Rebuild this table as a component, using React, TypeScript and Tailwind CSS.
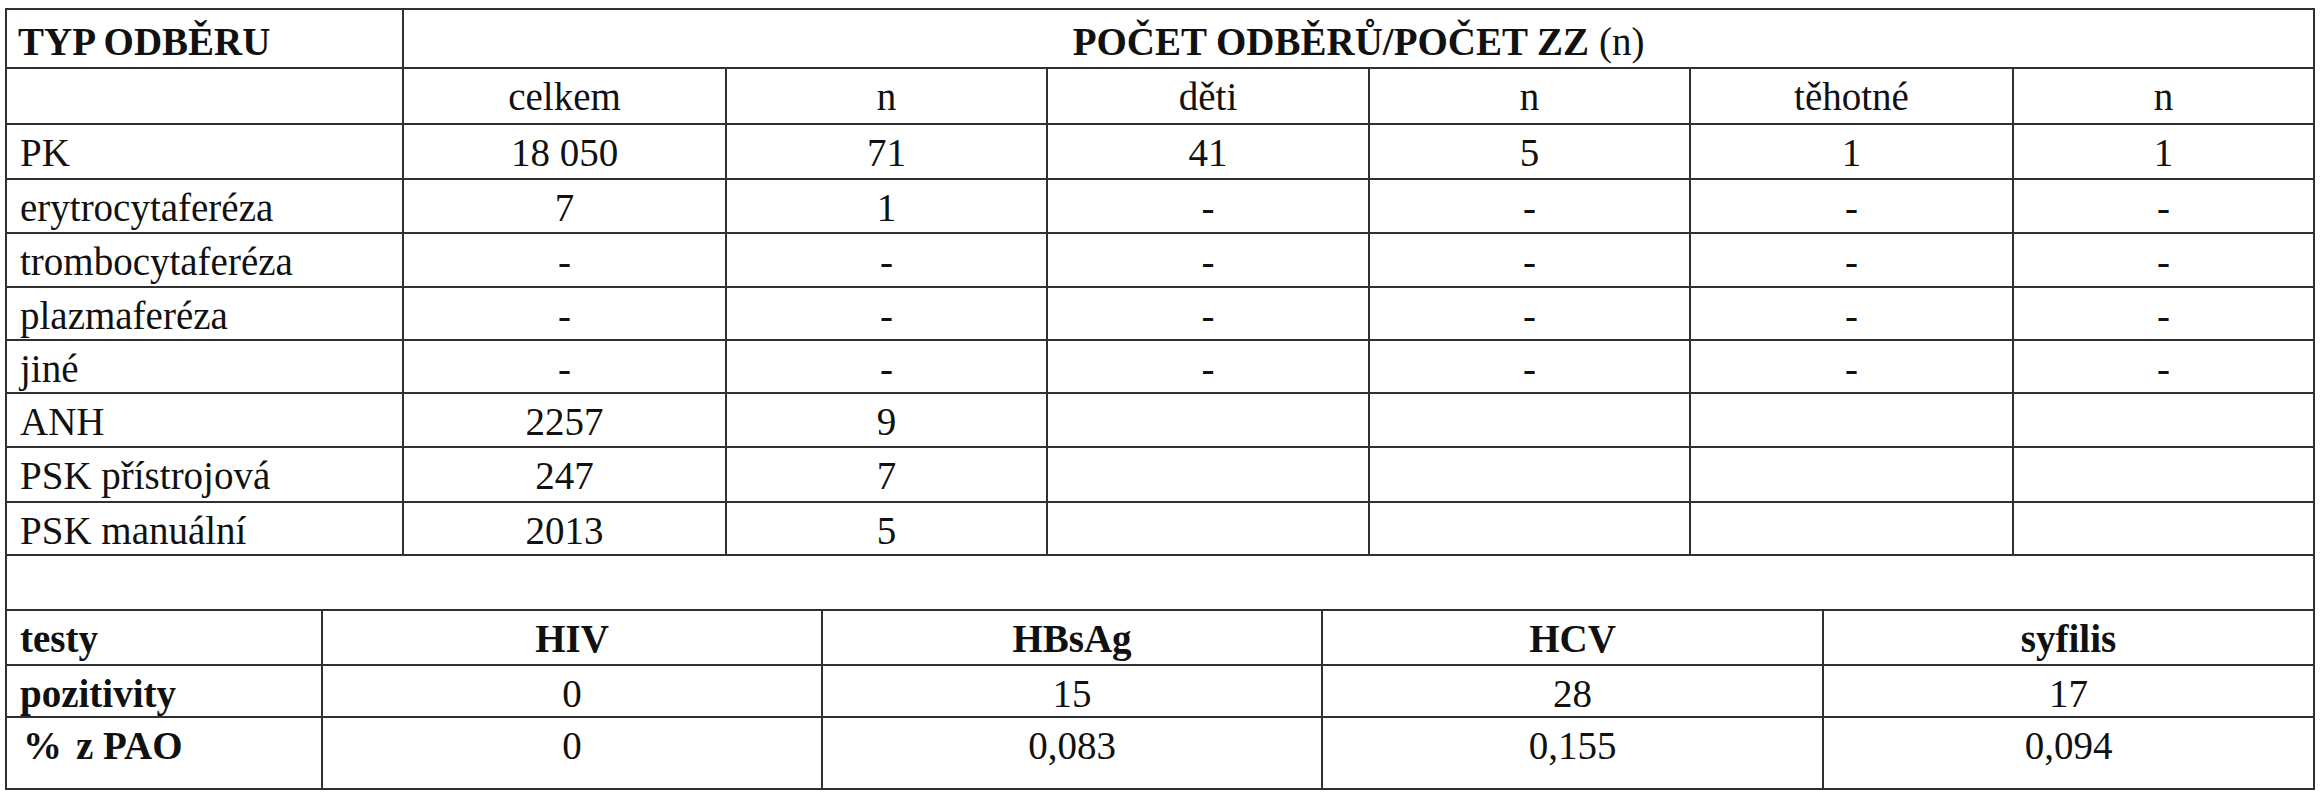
import React from "react";

// Rows of the upper table: label, celkem, n, děti, n, těhotné, n — plus the row height
const odbery = [
  { h: "h-[55px]", cells: ["PK", "18 050", "71", "41", "5", "1", "1"] },
  { h: "h-[54px]", cells: ["erytrocytaferéza", "7", "1", "-", "-", "-", "-"] },
  { h: "h-[54px]", cells: ["trombocytaferéza", "-", "-", "-", "-", "-", "-"] },
  { h: "h-[53px]", cells: ["plazmaferéza", "-", "-", "-", "-", "-", "-"] },
  { h: "h-[53px]", cells: ["jiné", "-", "-", "-", "-", "-", "-"] },
  { h: "h-[54px]", cells: ["ANH", "2257", "9", "", "", "", ""] },
  { h: "h-[55px]", cells: ["PSK přístrojová", "247", "7", "", "", "", ""] },
  { h: "h-[53px]", cells: ["PSK manuální", "2013", "5", "", "", "", ""] },
];

const subHead = ["", "celkem", "n", "děti", "n", "těhotné", "n"];

// Lower table: tests
const testy = [
  { h: "h-[55px]", bold: true, label: "testy", cells: ["HIV", "HBsAg", "HCV", "syfilis"] },
  { h: "h-[52px]", bold: false, label: "pozitivity", cells: ["0", "15", "28", "17"] },
  { h: "h-[72px]", bold: false, label: "pao", cells: ["0", "0,083", "0,155", "0,094"] },
];

const cell = "border-r-2 border-b-2 border-[#303030] pt-[6px] leading-[44px] whitespace-nowrap";

export default function App() {
  return (
    <div className="w-[2322px] h-[800px] bg-white text-[#111111] text-[39px] pt-[8px] pl-[5px] font-['Liberation_Serif','DejaVu_Serif',serif]">
      {/* Upper table */}
      <div className="grid w-[2310px] grid-cols-[397px_323px_321px_322px_321px_323px_301px] border-t-2 border-l-2 border-[#303030]">
        <div className={`${cell} h-[59px] pt-[10px] pl-[11px] font-bold`}>TYP ODBĚRU</div>
        <div className={`${cell} h-[59px] pt-[10px] col-span-6 text-center`}>
          <span className="font-bold">POČET ODBĚRŮ/POČET ZZ</span> (n)
        </div>

        {subHead.map((t, i) => (
          <div key={`s${i}`} className={`${cell} h-[56px] ${i === 0 ? "pl-[13px]" : "text-center"}`}>
            {t}
          </div>
        ))}

        {odbery.map((row, r) =>
          row.cells.map((t, i) => (
            <div key={`${r}-${i}`} className={`${cell} ${row.h} ${i === 0 ? "pl-[13px]" : "text-center"}`}>
              {t}
            </div>
          ))
        )}
      </div>

      {/* Lower table */}
      <div className="grid w-[2310px] grid-cols-[316px_500px_500px_501px_491px] border-l-2 border-[#303030]">
        <div className={`${cell} h-[55px] col-span-5`} />
        {testy.map((row, r) => (
          <React.Fragment key={r}>
            <div className={`${cell} ${row.h} pl-[13px] font-bold`}>
              {row.label === "pao" ? (
                <span className="pl-[3px]">
                  %<span className="ml-[14px]">z PAO</span>
                </span>
              ) : (
                row.label
              )}
            </div>
            {row.cells.map((t, i) => (
              <div key={i} className={`${cell} ${row.h} text-center ${row.bold ? "font-bold" : ""}`}>
                {t}
              </div>
            ))}
          </React.Fragment>
        ))}
      </div>
    </div>
  );
}
